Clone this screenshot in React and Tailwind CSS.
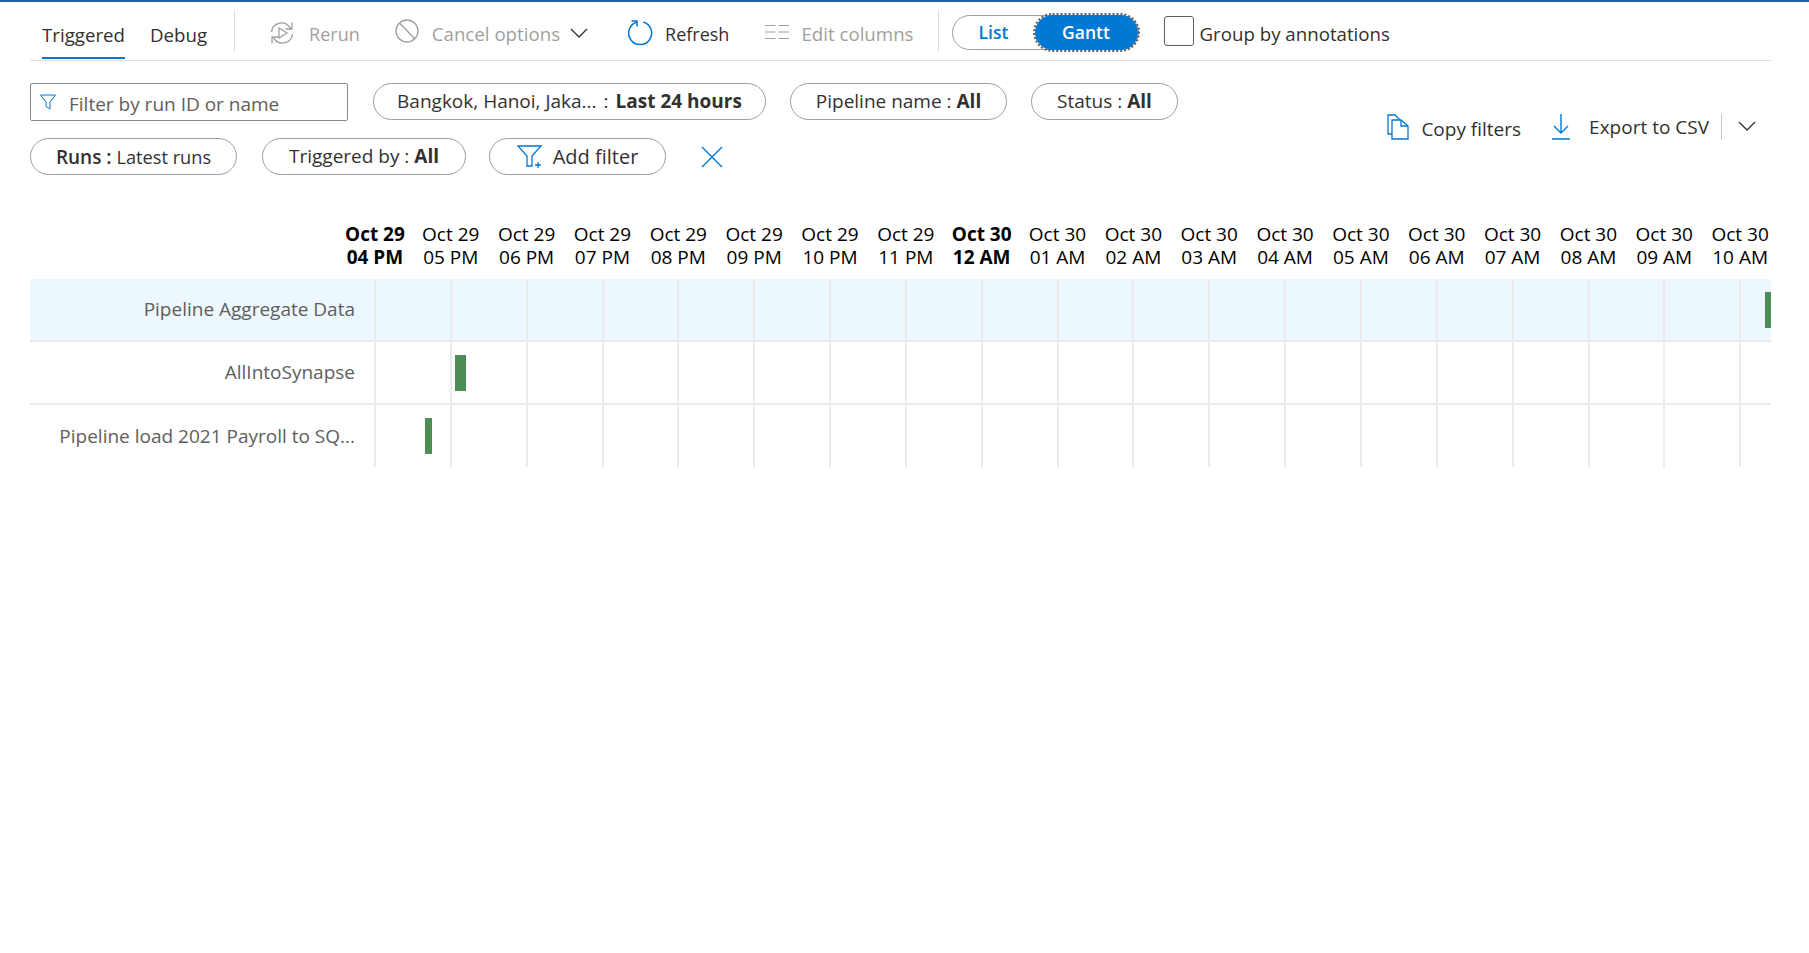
import React from "react";

const FONT = "font-['Open_Sans','Noto_Sans',sans-serif]";

const hours = [
  ["Oct 29", "04 PM", true],
  ["Oct 29", "05 PM"],
  ["Oct 29", "06 PM"],
  ["Oct 29", "07 PM"],
  ["Oct 29", "08 PM"],
  ["Oct 29", "09 PM"],
  ["Oct 29", "10 PM"],
  ["Oct 29", "11 PM"],
  ["Oct 30", "12 AM", true],
  ["Oct 30", "01 AM"],
  ["Oct 30", "02 AM"],
  ["Oct 30", "03 AM"],
  ["Oct 30", "04 AM"],
  ["Oct 30", "05 AM"],
  ["Oct 30", "06 AM"],
  ["Oct 30", "07 AM"],
  ["Oct 30", "08 AM"],
  ["Oct 30", "09 AM"],
  ["Oct 30", "10 AM"],
];

const rows = [
  { name: "Pipeline Aggregate Data", left: 1391, width: 7, selected: true },
  { name: "AllIntoSynapse", left: 81, width: 11 },
  { name: "Pipeline load 2021 Payroll to SQ...", left: 51, width: 7 },
];

const RerunIcon = () => (
  <svg width="26" height="26" viewBox="0 0 26 26" fill="none" stroke="#a19f9d" strokeWidth="1.3">
    <path d="M2.500 12a10 10 0 0 1 18-5l1.500 2" />
    <path d="M23 2.500V9H16.500" />
    <path d="M23.500 14a10 10 0 0 1-18 5l-1.500-2" />
    <path d="M3 23.500V17H9.500" />
    <path d="M10 8v10l8-5z" />
  </svg>
);

const CancelIcon = () => (
  <svg width="26" height="26" viewBox="0 0 26 26" fill="none" stroke="#a19f9d" strokeWidth="1.3">
    <circle cx="13" cy="13" r="11" />
    <path d="M5.500 5 L21 21" />
  </svg>
);

const Chevron = ({ size = 18 }) => (
  <svg width={size} height={size} viewBox="0 0 18 18" fill="none" stroke="#323130" strokeWidth="1.3">
    <path d="M1 5l8 8 8-8" />
  </svg>
);

const RefreshIcon = () => (
  <svg width="26" height="28" viewBox="0 0 26 28" fill="none" stroke="#0078d4" strokeWidth="1.5">
    <path d="M15.300 3A11.500 11.500 0 1 1 9 3" />
    <path d="M3.500 2H9V7.500" />
  </svg>
);

const ColumnsIcon = () => (
  <svg width="26" height="16" viewBox="0 0 26 16" fill="none" stroke="#a19f9d" strokeWidth="1.2">
    <path d="M1 1.500h10.500M1 8h10.500M1 14.500h10.500M14.500 1.500h10.500M14.500 8h10.500M14.500 14.500h10.500" />
  </svg>
);

const FunnelIcon = () => (
  <svg width="16" height="16" viewBox="0 0 16 16" fill="none" stroke="#0078d4" strokeWidth="1">
    <path d="M.5 1h15L10 8v7l-4-2.500V8z" />
  </svg>
);

const AddFilterIcon = () => (
  <svg width="26" height="24" viewBox="0 0 26 24" fill="none" stroke="#0078d4" strokeWidth="1.3">
    <path d="M1 1h23L15 11v10h-5V11z" />
    <path d="M18 20h6M21 17v6" />
  </svg>
);

const CloseIcon = () => (
  <svg width="24" height="24" viewBox="0 0 24 24" fill="none" stroke="#0078d4" strokeWidth="1.4">
    <path d="M2 2l20 20M22 2L2 22" />
  </svg>
);

const CopyIcon = () => (
  <svg width="22" height="26" viewBox="0 0 22 26" fill="none" stroke="#0078d4" strokeWidth="1.3">
    <path d="M5 20H1V1h7l5 5" />
    <path d="M5 6h9l7 6v13H5z" fill="#fff" />
    <path d="M14 6v6h7" />
  </svg>
);

const ExportIcon = () => (
  <svg width="18" height="26" viewBox="0 0 18 26" fill="none" stroke="#0078d4" strokeWidth="1.4">
    <path d="M9 0v19M2 12l7 7 7-7M0 25h18" />
  </svg>
);

const Pill = ({ children, className }) => (
  <div className={`flex h-[37px] items-center justify-center rounded-full border border-[#a19f9d] text-[19px] text-[#323130] ${className}`}>
    {children}
  </div>
);

export default function App() {
  return (
    <div className={`${FONT} min-h-[953px] border-t-2 border-[#1f5fa8] bg-white pl-[30px] pr-[38px]`}>
      {/* top command bar */}
      <div className="flex h-[59px] items-center border-b border-[#e1dfdd] text-[18.7px]">
        <div className="relative ml-[12px] flex h-full items-center pt-[9px] text-[#323130]">
          Triggered
          <div className="absolute bottom-[1px] left-0 h-[2px] w-full bg-[#0078d4]" />
        </div>
        <div className="ml-[25px] flex h-full items-center pt-[9px] text-[#323130]">Debug</div>
        <div className="ml-[27px] h-[42px] w-px bg-[#e1dfdd]" />
        <div className="ml-[34px] mt-[3px] flex items-center gap-[14px] text-[18px] text-[#a19f9d]">
          <RerunIcon />
          <span className="pt-[3px]">Rerun</span>
        </div>
        <div className="ml-[34px] mt-[1px] flex items-center gap-[10px] text-[#a19f9d]">
          <CancelIcon />
          <span className="ml-[2px] pt-[5px]">Cancel options</span>
          <div className="flex pt-[3px]"><Chevron /></div>
        </div>
        <div className="ml-[40px] mt-[3px] flex items-center gap-[11px] text-[18px] text-[#323130]">
          <RefreshIcon />
          <span className="pt-[3px]">Refresh</span>
        </div>
        <div className="ml-[35px] mt-[3px] flex items-center gap-[11px] text-[#a19f9d]">
          <ColumnsIcon />
          <span className="pt-[3px]">Edit columns</span>
        </div>
        <div className="ml-[24px] h-[42px] w-px bg-[#e1dfdd]" />
        <div className="ml-[13px] mt-[3px] flex h-[35px] w-[187px] items-center rounded-full border border-[#a19f9d]">
          <div className="flex-1 text-center text-[17.500px] font-semibold text-[#0078d4]">List</div>
          <div className="flex h-[35px] w-[103px] items-center justify-center rounded-full bg-[#0078d4] text-[17.500px] font-semibold text-white outline-2 outline-dotted outline-[#605e5c]">
            Gantt
          </div>
        </div>
        <div className="ml-[25px] h-[30px] w-[30px] rounded-[3px] border border-[#605e5c]" />
        <div className="ml-[6px] mt-[7px] text-[#323130]">Group by annotations</div>
      </div>

      {/* filters */}
      <div className="flex justify-between">
        <div className="w-[800px]">
          <div className="mt-[22px] flex items-start">
            <div className="flex h-[38px] w-[318px] items-center gap-[13px] rounded-[2px] border border-[#8a8886] pl-[9px] text-[19px] text-[#605e5c]">
              <FunnelIcon />
              <span className="pt-[4px]">Filter by run ID or name</span>
            </div>
            <Pill className="ml-[25px] w-[393px] text-[18.700px]">
              Bangkok, Hanoi, Jaka...<span className="mx-[7px]">:</span><b className="font-bold">Last 24 hours</b>
            </Pill>
          </div>
          <div className="mt-[17px] flex items-center">
            <Pill className="w-[207px] pt-[2px]">
              <b className="font-semibold">Runs :</b>&nbsp;<span className="text-[18.200px]">Latest runs</span>
            </Pill>
            <Pill className="ml-[25px] w-[204px]">
              Triggered by :&nbsp;<b className="font-bold">All</b>
            </Pill>
            <Pill className="ml-[23px] w-[177px] gap-[10px]">
              <AddFilterIcon />
              <span className="text-[20px]">Add filter</span>
            </Pill>
            <div className="ml-[34px] flex">
              <CloseIcon />
            </div>
          </div>
        </div>
        <div className="flex flex-1 items-start justify-between">
          <div className="ml-[-40px] mt-[22px] flex gap-[24px]">
            <Pill className="w-[217px]">
              Pipeline name :&nbsp;<b className="font-bold">All</b>
            </Pill>
            <Pill className="w-[147px]">
              Status :&nbsp;<b className="font-bold">All</b>
            </Pill>
          </div>
          <div className="mt-[50px] flex items-center text-[19px] text-[#323130]">
            <CopyIcon />
            <span className="ml-[12px] mt-[4px]">Copy filters</span>
            <div className="ml-[31px]"><ExportIcon /></div>
            <span className="ml-[19px]">Export to CSV</span>
            <div className="ml-[12px] h-[26px] w-px bg-[#c8c6c4]" />
            <div className="mb-[2px] ml-[16px] mr-[15px]"><Chevron /></div>
          </div>
        </div>
      </div>

      {/* gantt */}
      <div className="mt-[48px] flex text-[19px] leading-[23px] text-black">
        <div className="w-[307px] shrink-0" />
        {hours.map(([day, hour, bold]) => (
          <div key={hour + day} className={`w-[75.85px] shrink-0 whitespace-nowrap text-center ${bold ? "font-bold" : ""}`}>
            <div>{day}</div>
            <div>{hour}</div>
          </div>
        ))}
      </div>
      <div className="mt-[10px] overflow-hidden">
        {rows.map((row) => (
          <div key={row.name} className={`flex h-[63px] border-b-2 border-[#edebe9] last:h-[62px] last:border-b-0 ${row.selected ? "bg-[#edf7fe]" : ""}`}>
            <div className="flex w-[344px] shrink-0 items-center justify-end whitespace-nowrap pr-[19px] text-[19px] text-[#605e5c]">
              {row.name}
            </div>
            <div className="relative flex flex-1 overflow-hidden">
              {hours.map(([day, hour]) => (
                <div key={hour + day} className="w-[75.85px] shrink-0 border-l-2 border-[#edebe9]" />
              ))}
              <div className="absolute top-[13px] h-[36px] bg-[#4c8c55]" style={{ left: row.left, width: row.width }} />
            </div>
          </div>
        ))}
      </div>
    </div>
  );
}
